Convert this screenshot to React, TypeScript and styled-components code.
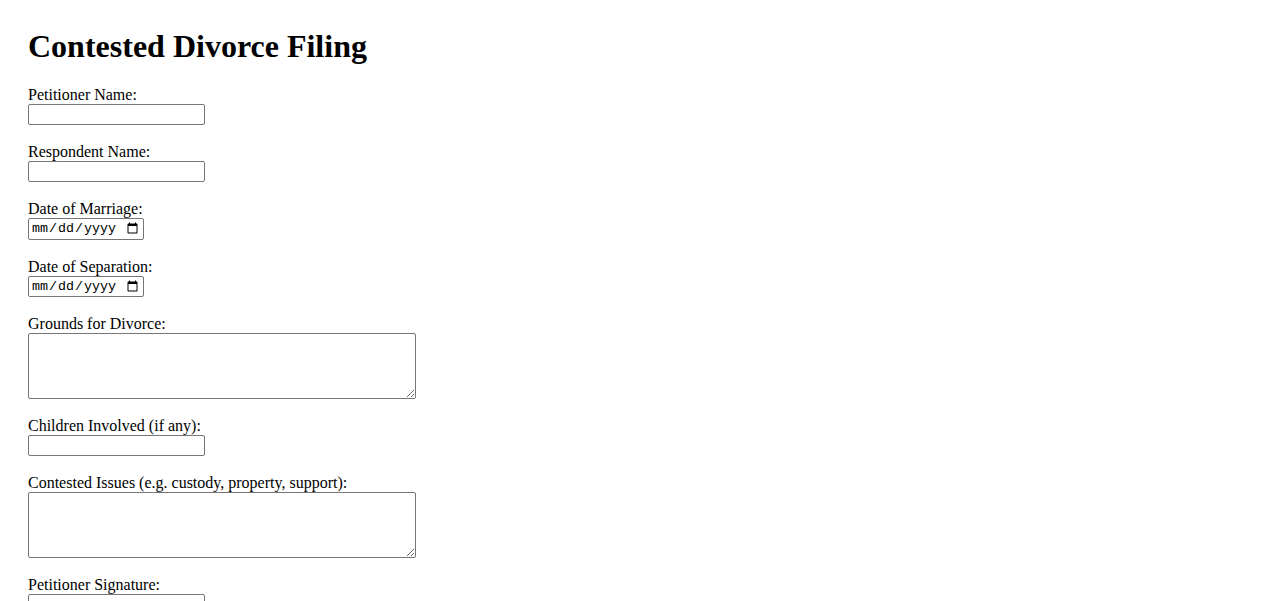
import React from "react";
import styled, { createGlobalStyle } from "styled-components";

const GlobalStyle = createGlobalStyle`
  html {
    scrollbar-width: none;
  }
  html::-webkit-scrollbar {
    display: none;
  }
  body {
    margin: 0;
    background: #ffffff;
    color: #000000;
    font-family: "Liberation Serif", "Times New Roman", serif;
    font-size: 16px;
  }
`;

const Page = styled.div`
  padding: 28px;
`;

const Title = styled.h1`
  margin: 0 0 20px;
  font-size: 32px;
  line-height: 37px;
  font-weight: bold;
`;

const Form = styled.form`
  display: flex;
  flex-direction: column;
  align-items: flex-start;
`;

const Field = styled.div`
  display: flex;
  flex-direction: column;
  align-items: flex-start;
  margin-bottom: 17px;
`;

const Label = styled.label`
  display: block;
  line-height: 19px;
  height: 19px;
`;

const controlBase = `
  box-sizing: border-box;
  margin: 0;
  border: 1px solid #767676;
  border-radius: 2px;
  background: #ffffff;
  color: #000000;
`;

const TextInput = styled.input`
  ${controlBase}
  width: 177px;
  height: 21px;
  padding: 1px 2px;
  font-family: "Liberation Sans", Arial, sans-serif;
  font-size: 13.33px;
`;

const DateInput = styled.input`
  ${controlBase}
  width: 116px;
  height: 21.5px;
  padding: 1px 2px;
  font-family: "Liberation Mono", "Courier New", monospace;
  font-size: 13.33px;
`;

const TextArea = styled.textarea`
  ${controlBase}
  width: 388px;
  height: 66px;
  padding: 2px;
  font-family: "Liberation Mono", "Courier New", monospace;
  font-size: 13.33px;
`;

const SubmitButton = styled.button`
  font-family: "Liberation Sans", Arial, sans-serif;
  font-size: 13.33px;
  padding: 1px 6px;
`;

type FieldDef = {
  id: string;
  label: string;
  kind: "text" | "date" | "area";
};

const fields: FieldDef[] = [
  { id: "petitioner", label: "Petitioner Name:", kind: "text" },
  { id: "respondent", label: "Respondent Name:", kind: "text" },
  { id: "marriageDate", label: "Date of Marriage:", kind: "date" },
  { id: "separationDate", label: "Date of Separation:", kind: "date" },
  { id: "grounds", label: "Grounds for Divorce:", kind: "area" },
  { id: "children", label: "Children Involved (if any):", kind: "text" },
  {
    id: "issues",
    label: "Contested Issues (e.g. custody, property, support):",
    kind: "area",
  },
  { id: "petitionerSig", label: "Petitioner Signature:", kind: "text" },
  { id: "respondentSig", label: "Respondent Signature:", kind: "text" },
];

export default function App() {
  return (
    <Page>
      <GlobalStyle />
      <Title>Contested Divorce Filing</Title>
      <Form onSubmit={(e) => e.preventDefault()}>
        {fields.map((f) => (
          <Field key={f.id}>
            <Label htmlFor={f.id}>{f.label}</Label>
            {f.kind === "text" && <TextInput id={f.id} type="text" />}
            {f.kind === "date" && <DateInput id={f.id} type="date" />}
            {f.kind === "area" && <TextArea id={f.id} rows={4} cols={50} />}
          </Field>
        ))}
        <SubmitButton type="submit">Submit Filing</SubmitButton>
      </Form>
    </Page>
  );
}
